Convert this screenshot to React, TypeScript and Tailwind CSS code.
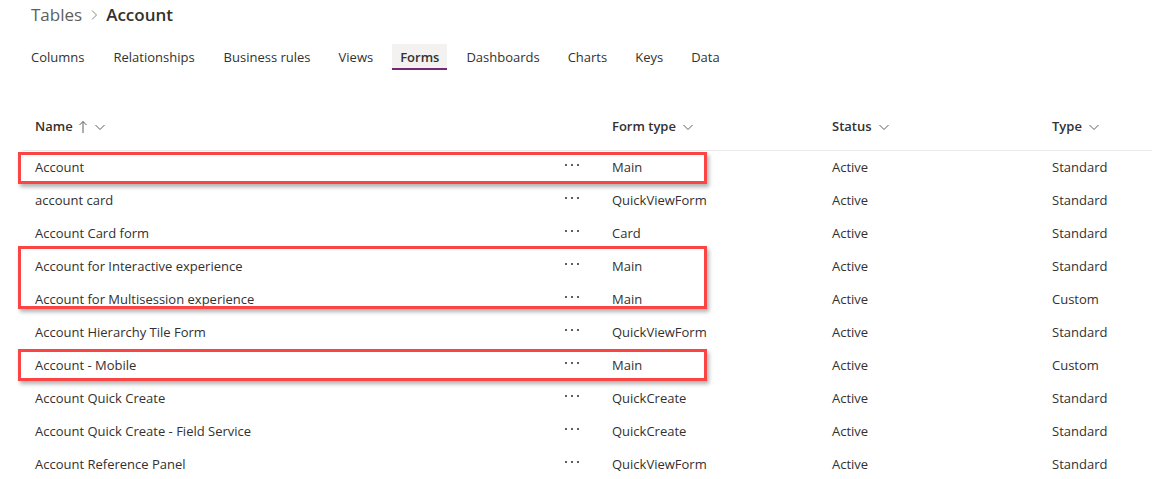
import React from "react"

type Row = { name: string; formType: string; status: string; type: string }

const rows: Row[] = [
  { name: "Account", formType: "Main", status: "Active", type: "Standard" },
  { name: "account card", formType: "QuickViewForm", status: "Active", type: "Standard" },
  { name: "Account Card form", formType: "Card", status: "Active", type: "Standard" },
  { name: "Account for Interactive experience", formType: "Main", status: "Active", type: "Standard" },
  { name: "Account for Multisession experience", formType: "Main", status: "Active", type: "Custom" },
  { name: "Account Hierarchy Tile Form", formType: "QuickViewForm", status: "Active", type: "Standard" },
  { name: "Account - Mobile", formType: "Main", status: "Active", type: "Custom" },
  { name: "Account Quick Create", formType: "QuickCreate", status: "Active", type: "Standard" },
  { name: "Account Quick Create - Field Service", formType: "QuickCreate", status: "Active", type: "Standard" },
  { name: "Account Reference Panel", formType: "QuickViewForm", status: "Active", type: "Standard" },
]

// groups of rows; marked ones get the red annotation box (box class holds its offset)
const groups: { rows: Row[]; box?: string }[] = [
  { rows: rows.slice(0, 1), box: "top-[1px] h-[32px]" },
  { rows: rows.slice(1, 3) },
  { rows: rows.slice(3, 5), box: "-top-[4px] h-[63px]" },
  { rows: rows.slice(5, 6) },
  { rows: rows.slice(6, 7), box: "top-[0px] h-[32px]" },
  { rows: rows.slice(7) },
]

const tabs = ["Columns", "Relationships", "Business rules", "Views", "Forms", "Dashboards", "Charts", "Keys", "Data"]

const cols = "grid grid-cols-[577px_220px_220px_1fr]"

const Chevron = () => (
  <svg width="12" height="12" viewBox="0 0 12 12" className="ml-[6px] text-[#605e5c]">
    <path d="M1.5 4 L6 8.5 L10.5 4" fill="none" stroke="currentColor" strokeWidth="1" />
  </svg>
)

const Dots = () => (
  <span className="flex gap-[4px] mr-[20px] -mt-[6px]">
    <span className="w-[2px] h-[2px] bg-[#605e5c]" />
    <span className="w-[2px] h-[2px] bg-[#605e5c]" />
    <span className="w-[2px] h-[2px] bg-[#605e5c]" />
  </span>
)

function TableRow({ row }: { row: Row }) {
  return (
    <div className={`${cols} h-[33px] items-center text-[13px] text-[#323130]`}>
      <div className="flex items-center justify-between pl-[13px]">
        <span>{row.name}</span>
        <Dots />
      </div>
      <div className="pl-[13px]">{row.formType}</div>
      <div className="pl-[13px]">{row.status}</div>
      <div className="pl-[13px]">{row.type}</div>
    </div>
  )
}

export default function App() {
  return (
    <div className="w-[1152px] h-[479px] overflow-hidden bg-white" style={{ fontFamily: '"Open Sans", "Noto Sans", sans-serif' }}>
      <div className="flex items-center pl-[31px] h-[30px] text-[17px]">
        <span className="text-[#605e5c]">Tables</span>
        <svg width="12" height="12" viewBox="0 0 12 12" className="mx-[6px] text-[#8a8886]">
          <path d="M4 1.5 L8.5 6 L4 10.5" fill="none" stroke="currentColor" strokeWidth="1" />
        </svg>
        <span className="font-semibold text-[#323130]">Account</span>
      </div>

      <div className="flex gap-[10px] pl-[22px] mt-[14px] text-[13px] text-[#323130]">
        {tabs.map((t, i) => (
          <div
            key={t}
            className={`h-[26px] pt-[3px] flex items-center border-b-2 ${
              i === 1 ? "px-[10px]" : t === "Forms" ? "px-[8px]" : "px-[9px]"
            } ${t === "Forms" ? "bg-[#f3f2f1] border-[#742774] font-semibold" : "border-transparent"}`}
          >
            {t}
          </div>
        ))}
      </div>

      <div className="pl-[22px] mt-[40px]">
        <div className={`${cols} h-[41px] items-center pb-[6px] text-[13px] font-semibold text-[#323130] border-b border-[#edebe9]`}>
          <div className="flex items-center pl-[13px]">
            Name
            <svg width="10" height="14" viewBox="0 0 10 14" className="ml-[5px] text-[#605e5c]">
              <path d="M5 13 V1.5 M1.5 5 L5 1.5 L8.5 5" fill="none" stroke="currentColor" strokeWidth="1" />
            </svg>
            <Chevron />
          </div>
          <div className="flex items-center pl-[13px]">
            Form type
            <Chevron />
          </div>
          <div className="flex items-center pl-[13px]">
            Status
            <Chevron />
          </div>
          <div className="flex items-center pl-[13px]">
            Type
            <Chevron />
          </div>
        </div>

        {groups.map((g, i) => (
          <div key={i} className="relative">
            {g.rows.map((r) => (
              <TableRow key={r.name} row={r} />
            ))}
            {g.box && (
              <div
                className={`absolute -left-[4px] w-[689px] border-[3px] border-[#fb4545] shadow-[2px_3px_4px_rgba(0,0,0,0.3)] pointer-events-none ${g.box}`}
              />
            )}
          </div>
        ))}
      </div>
    </div>
  )
}
